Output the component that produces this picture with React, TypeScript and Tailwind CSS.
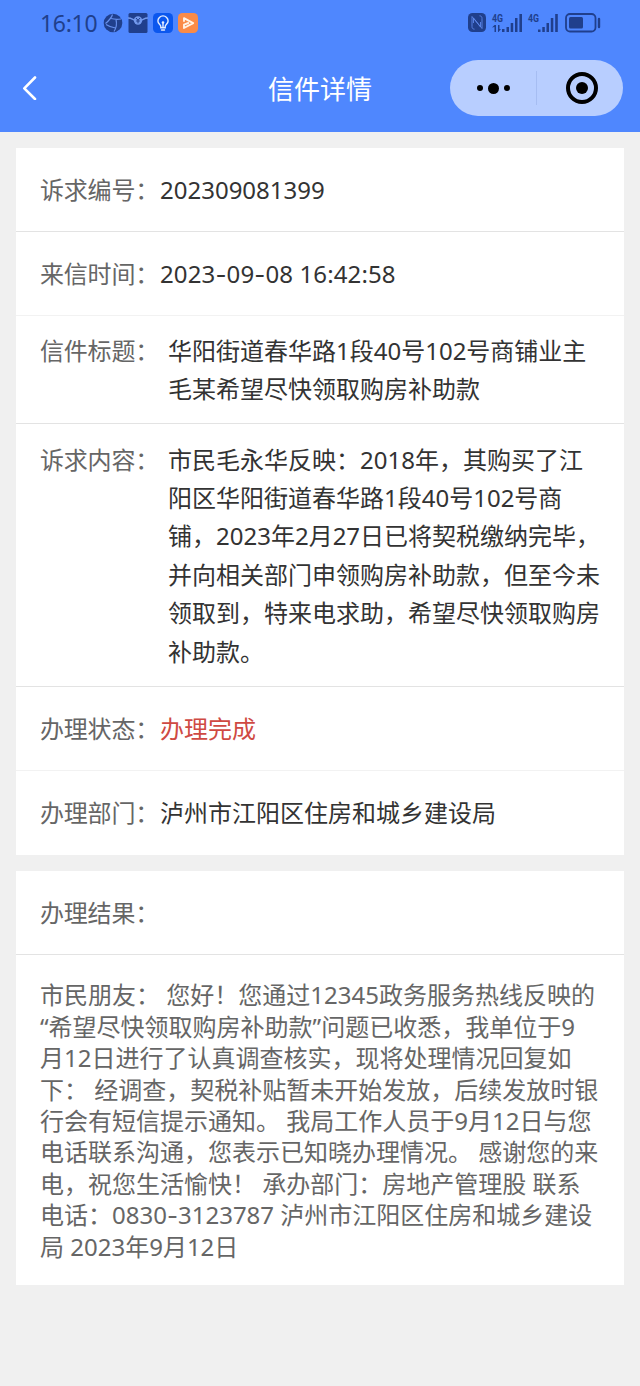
import type { ReactNode } from "react";

type DetailRowProps = {
  label: string;
  children: ReactNode;
  className?: string;
};

const complaintTitle = `华阳街道春华路1段40号102号商铺业主
毛某希望尽快领取购房补助款`;

const complaintContent = `市民毛永华反映：2018年，其购买了江
阳区华阳街道春华路1段40号102号商
铺，2023年2月27日已将契税缴纳完毕，
并向相关部门申领购房补助款，但至今未
领取到，特来电求助，希望尽快领取购房
补助款。`;

const replyLines = [
  "市民朋友： 您好！您通过12345政务服务热线反映的",
  "“希望尽快领取购房补助款”问题已收悉，我单位于9",
  "月12日进行了认真调查核实，现将处理情况回复如",
  "下： 经调查，契税补贴暂未开始发放，后续发放时银",
  "行会有短信提示通知。 我局工作人员于9月12日与您",
  "电话联系沟通，您表示已知晓办理情况。 感谢您的来",
  "电，祝您生活愉快！ 承办部门：房地产管理股 联系",
  "电话：0830-3123787 泸州市江阳区住房和城乡建设",
  "局 2023年9月12日",
];

/** Sets the hyphens of a date or phone number in a font with a wider dash. */
function WideHyphens({ text }: { text: string }) {
  return text.split(/(-)/).map((part, i) =>
    part === "-" ? (
      <span key={i} className="font-['Inter',sans-serif] leading-none">
        -
      </span>
    ) : (
      part
    ),
  );
}

function SignalIcon({ children, className }: { children: ReactNode; className: string }) {
  return (
    <svg className={`h-5 w-[31px] overflow-visible ${className}`} viewBox="0 0 31 20" fill="currentColor">
      <text
        x="0"
        y="9"
        fontSize="11"
        fontWeight="700"
        textLength="11"
        lengthAdjust="spacingAndGlyphs"
        className="font-['Roboto',sans-serif]"
      >
        4G
      </text>
      {children}
    </svg>
  );
}

function StatusBar() {
  return (
    <div className="flex h-11 items-center justify-between pt-px pr-[39px] pl-10 text-[#203f8c]">
      <div className="flex items-center">
        <span className="w-[63px] pt-[2px] text-[23px] leading-none tracking-[-0.3px]">
          16:10
        </span>
        <svg className="h-5 w-5" viewBox="0 0 20 20" fill="none">
          <circle cx="10" cy="10" r="9.3" fill="currentColor" />
          <path
            d="M2.5 10.5C5.5 8 8.5 5 9.5 1.5M8 5.5c3.5 1 6.5 1 10 .5M13 6.5c1 4 .5 8-2 12M3 11.5c3 2 6 3 9.5 3.5"
            stroke="#6690ed"
            strokeWidth="1.2"
          />
        </svg>
        <svg className="ml-[5px] h-5 w-5" viewBox="0 0 20 20" fill="none">
          <rect x="0.5" width="19" height="20" rx="1.5" fill="currentColor" />
          <path d="M0 5c3 0 4 1 6 2m14-2c-3 0-4 1-6 2" stroke="#7299ed" strokeWidth="1.4" />
          <circle cx="10" cy="7.5" r="4.2" fill="#7299ed" />
          <path d="m8 5 2 2.3L12 5M10 7.3v3M8.2 8h3.6" stroke="currentColor" />
        </svg>
        <svg className="ml-[5px] h-5 w-5" viewBox="0 0 20 20" fill="none">
          <rect width="20" height="20" rx="4.5" fill="#0b57ee" />
          <path
            d="M7.8 13.5c0-2-2.9-2.6-2.9-5.5a5.1 5.1 0 0 1 10.2 0c0 2.900-2.900 3.500-2.900 5.500v1.200H7.800zM8.500 17h3M10 14v-3.500"
            stroke="#e4edff"
            strokeWidth="1.4"
            strokeLinecap="round"
          />
          <circle cx="10" cy="9.5" r="1.3" fill="#e4edff" />
        </svg>
        <svg className="ml-[5px] h-5 w-5" viewBox="0 0 20 20" fill="none">
          <rect width="20" height="20" rx="4.5" fill="#fa8b47" />
          <path
            d="M6 8V5.2l9.2 4.9L6 15v-3.3L10.300 10"
            stroke="#fff3e5"
            strokeWidth="1.9"
            strokeLinecap="round"
            strokeLinejoin="round"
          />
        </svg>
      </div>

      <div className="flex items-center">
        <svg className="h-[19px] w-[18px]" viewBox="0 0 18 19" fill="none">
          <rect width="18" height="19" rx="4.5" fill="currentColor" />
          <path
            d="M6.5 16.2C4.500 16 4 15 4 13.500V3.500l8.500 10.500V9M11.500 2.800c2 .2 2.500 1.200 2.500 2.700v10L5.500 5v5"
            stroke="#5c88ec"
            strokeWidth="0.9"
          />
        </svg>
        <SignalIcon className="ml-[6px]">
          <path d="M0 14.5 2.5 12H4v7H2.5v-5zM6 12h1.5v4H9l-2.5 3H6zM10 16h2.5v3H10zM14.5 14H17v5h-2.5zM18.7 10h2.5v9h-2.5zM23 5h2.5v14H23zM27.4 1H30v18h-2.6z" />
        </SignalIcon>
        <SignalIcon className="ml-[5px]">
          <path d="M10 16.5h2.5V19H10zM14.3 14h2.5v5h-2.5zM18.5 10H21v9h-2.5zM22.8 5h2.5v14h-2.5zM27.2 1h2.6v18h-2.6z" />
        </SignalIcon>
        <svg className="ml-[6px] h-5 w-9" viewBox="0 0 36 20" fill="none">
          <rect x="1" y="1" width="29.5" height="17.5" rx="4" stroke="currentColor" strokeWidth="1.8" />
          <rect x="4" y="4" width="14" height="11.5" rx="1.5" fill="currentColor" />
          <path d="M34 6v8" stroke="currentColor" strokeWidth="2.4" strokeLinecap="round" />
        </svg>
      </div>
    </div>
  );
}

function NavBar() {
  return (
    <div className="grid h-[88px] grid-cols-[1fr_auto_1fr] items-center px-[17px]">
      <button type="button" aria-label="返回" className="ml-[5px] w-4">
        <svg className="h-6 w-4" viewBox="0 0 16 24" fill="none">
          <path
            d="M13 1.5 2.3 12.3 13 23"
            stroke="#fff"
            strokeWidth="2.6"
            strokeLinecap="round"
            strokeLinejoin="round"
          />
        </svg>
      </button>
      <h1 className="pt-0.5 text-[26px] leading-none text-white">信件详情</h1>
      <div className="flex h-14 w-[173px] items-center justify-self-end rounded-full bg-[#b8ceff]">
        <button type="button" aria-label="更多" className="flex w-[86px] items-center justify-center gap-[5px]">
          <span className="h-1.5 w-1.5 rounded-full bg-black" />
          <span className="h-[11px] w-[11px] rounded-full bg-black" />
          <span className="h-1.5 w-1.5 rounded-full bg-black" />
        </button>
        <span className="h-[34px] w-px bg-[#a6bdf2]" />
        <button type="button" aria-label="关闭" className="flex flex-1 justify-center pl-[3px]">
          <span className="flex h-8 w-8 items-center justify-center rounded-full border-4 border-black">
            <span className="h-3 w-3 rounded-full bg-black" />
          </span>
        </button>
      </div>
    </div>
  );
}

function DetailRow({ label, children, className = "text-[#333]" }: DetailRowProps) {
  return (
    <div className="flex h-[84px] items-center border-b border-[#e3e3e3] px-6 nth-2:border-[#f2f2f2] nth-5:border-[#f2f2f2] last:border-b-0">
      <span className="w-[120px] shrink-0 tracking-[-0.2px] text-[#666]">{label}：</span>
      <span className={className}>{children}</span>
    </div>
  );
}

/** Row whose value runs over several lines; the label stays on the first. */
function TextRow({ label, children, className }: DetailRowProps) {
  return (
    <div className={`flex border-b border-[#e3e3e3] px-6 leading-[38.4px] ${className}`}>
      <span className="w-32 shrink-0 tracking-[-0.2px] text-[#666]">{label}：</span>
      <p className="whitespace-pre text-[#333]">{children}</p>
    </div>
  );
}

export default function App() {
  return (
    <div className="min-h-[1386px] w-[640px] overflow-hidden bg-[#f0f0f0] font-['Noto_Sans','Noto_Sans_CJK_SC',sans-serif] text-[24px]">
      <header className="h-[132px] bg-[#4f87fe]">
        <StatusBar />
        <NavBar />
      </header>

      <main className="flex flex-col gap-4 p-4">
        <section className="bg-white">
          <DetailRow label="诉求编号">202309081399</DetailRow>
          <DetailRow label="来信时间" className="tracking-[0.12px] text-[#333]">
            <WideHyphens text="2023-09-08 16:42:58" />
          </DetailRow>
          <TextRow label="信件标题" className="h-[108px] pt-4">
            {complaintTitle}
          </TextRow>
          <TextRow label="诉求内容" className="h-[263px] pt-[16.6px]">
            {complaintContent}
          </TextRow>
          <DetailRow label="办理状态" className="text-[#cf4a43]">
            办理完成
          </DetailRow>
          <DetailRow label="办理部门">泸州市江阳区住房和城乡建设局</DetailRow>
        </section>

        <section className="bg-white">
          <div className="flex h-[84px] items-center border-b border-[#e3e3e3] px-6 tracking-[-0.2px] text-[#666]">
            办理结果：
          </div>
          <div className="h-[330px] px-6 pt-[24.4px] leading-[31.4px] whitespace-pre text-[#666]">
            {replyLines.map((line) => (
              <p key={line}>
                <WideHyphens text={line} />
              </p>
            ))}
          </div>
        </section>
      </main>
    </div>
  );
}
